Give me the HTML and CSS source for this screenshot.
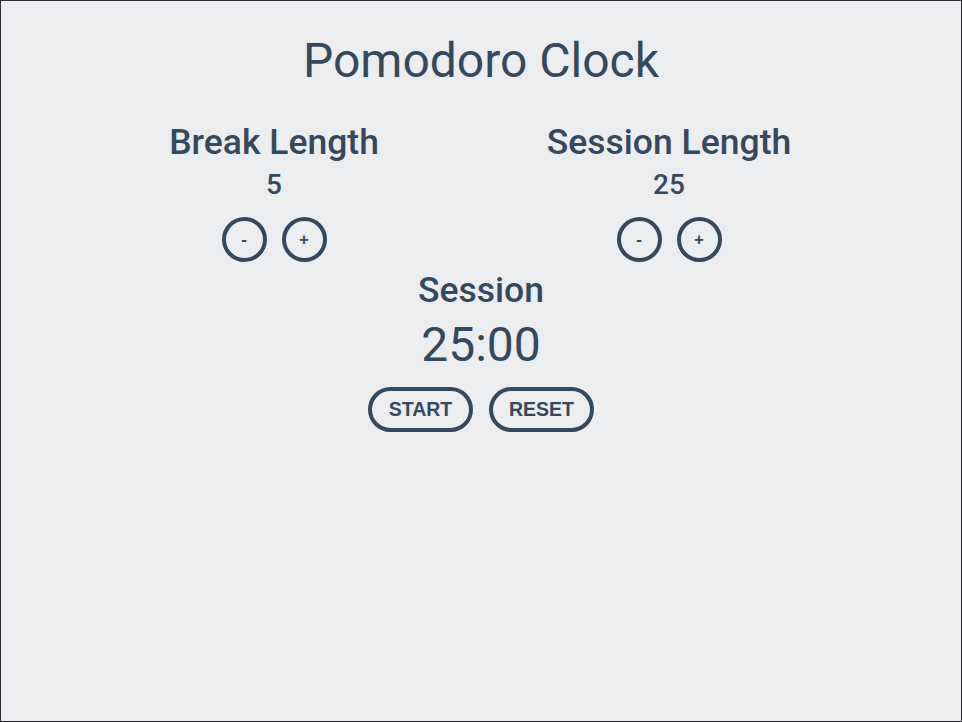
FILE: index.html
```html
<!DOCTYPE html>
<html lang="en">
<head>
<meta charset="utf-8">
<title>Pomodoro Clock</title>
<link rel="stylesheet" href="styles.css">
</head>
<body>
<div class="frame">
  <h1 class="title">Pomodoro Clock</h1>
  <div class="settings">
    <div class="setting">
      <h2 class="label">Break Length</h2>
      <div class="value">5</div>
      <div class="controls">
        <button class="round">-</button>
        <button class="round">+</button>
      </div>
    </div>
    <div class="setting">
      <h2 class="label">Session Length</h2>
      <div class="value">25</div>
      <div class="controls">
        <button class="round">-</button>
        <button class="round">+</button>
      </div>
    </div>
  </div>
  <div class="timer">
    <h2 class="label">Session</h2>
    <div class="time">25:00</div>
    <div class="actions">
      <button class="pill">START</button>
      <button class="pill">RESET</button>
    </div>
  </div>
</div>
</body>
</html>
```
FILE: styles.css
```css
html, body {
  margin: 0;
  padding: 0;
}
body {
  background: #ecedef;
  font-family: Roboto, "Liberation Sans", sans-serif;
  color: #34495e;
}
.frame {
  box-sizing: border-box;
  width: 962px;
  height: 722px;
  border: 1px solid #2b2d31;
  background: #ecedef;
  display: flex;
  flex-direction: column;
  align-items: center;
}
.title {
  margin: 28px 0 0;
  font-size: 48px;
  font-weight: 400;
  line-height: 64px;
}
.settings {
  display: flex;
  justify-content: center;
  align-self: stretch;
  padding-right: 19px;
  margin-top: 27px;
}
.setting {
  width: 395px;
  display: flex;
  flex-direction: column;
  align-items: center;
}
.label {
  margin: 0;
  font-size: 35.5px;
  font-weight: 500;
  line-height: 44px;
}
.value {
  margin-top: 3px;
  font-size: 28px;
  font-weight: 500;
  line-height: 36px;
}
.controls {
  display: flex;
  gap: 15px;
  margin-top: 14px;
}
.round, .pill {
  box-sizing: border-box;
  background: transparent;
  border: 4px solid #34495e;
  color: #34495e;
  font-family: "Liberation Sans", Arial, sans-serif;
  font-weight: 700;
  padding: 0;
  cursor: pointer;
}
.round {
  width: 45px;
  height: 45px;
  border-radius: 50%;
  font-size: 17px;
}
.timer {
  display: flex;
  flex-direction: column;
  align-items: center;
  margin-top: 6px;
}
.time {
  margin-top: 5px;
  font-size: 48px;
  font-weight: 400;
  line-height: 56px;
}
.actions {
  display: flex;
  gap: 16px;
  margin-top: 14px;
}
.pill {
  width: 105px;
  height: 45px;
  border-radius: 23px;
  font-size: 19.5px;
}
```
